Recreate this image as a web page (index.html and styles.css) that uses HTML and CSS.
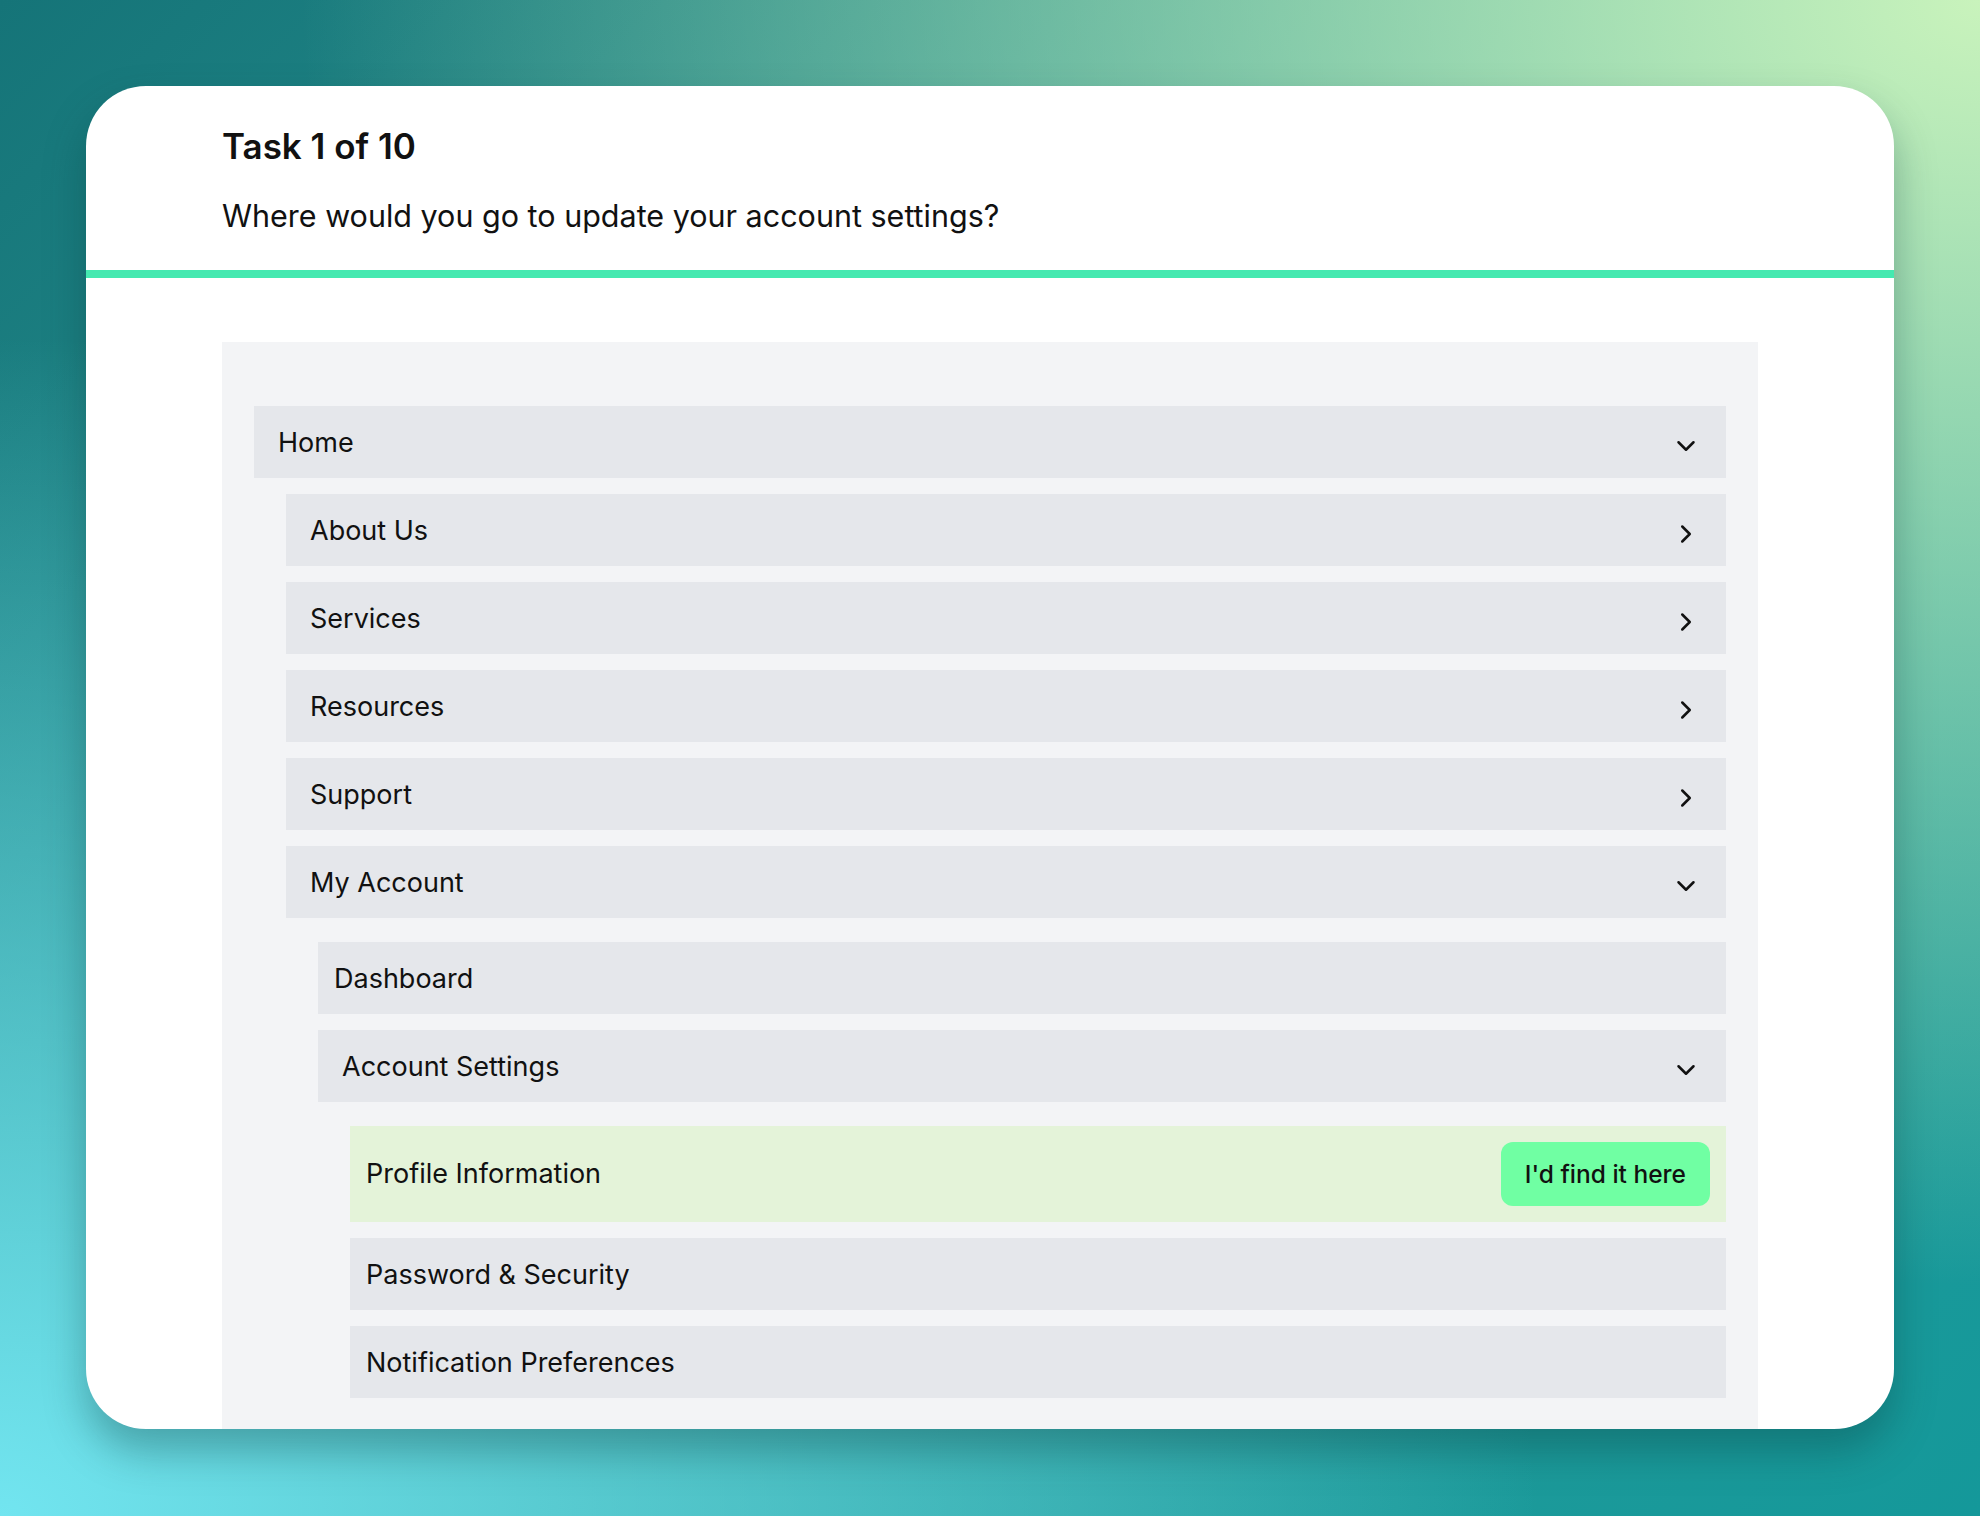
FILE: index.html
```html
<!DOCTYPE html>
<html lang="en">
<head>
    <meta charset="UTF-8">
    <meta name="viewport" content="width=device-width, initial-scale=1.0">
    <title>Tree Test - Task 1 of 10</title>
    <link rel="stylesheet" href="styles.css">
</head>
<body>
    <div class="page">
        <div class="card">
            <div class="task-header">
                <h1>Task 1 of 10</h1>
                <p class="question">Where would you go to update your account settings?</p>
            </div>

            <div class="task-body">
                <div class="tree">
                    <ul class="tree-list">
                        <li>
                            <div class="row branch">
                                <span>Home</span>
                                <svg class="chev" viewBox="0 0 24 24"><path d="M19.5 8.25l-7.5 7.5-7.5-7.5"/></svg>
                            </div>
                            <ul class="tree-list nested first">
                                <li>
                                    <div class="row branch">
                                        <span>About Us</span>
                                        <svg class="chev" viewBox="0 0 24 24"><path d="M8.25 4.5l7.5 7.5-7.5 7.5"/></svg>
                                    </div>
                                </li>
                                <li>
                                    <div class="row branch">
                                        <span>Services</span>
                                        <svg class="chev" viewBox="0 0 24 24"><path d="M8.25 4.5l7.5 7.5-7.5 7.5"/></svg>
                                    </div>
                                </li>
                                <li>
                                    <div class="row branch">
                                        <span>Resources</span>
                                        <svg class="chev" viewBox="0 0 24 24"><path d="M8.25 4.5l7.5 7.5-7.5 7.5"/></svg>
                                    </div>
                                </li>
                                <li>
                                    <div class="row branch">
                                        <span>Support</span>
                                        <svg class="chev" viewBox="0 0 24 24"><path d="M8.25 4.5l7.5 7.5-7.5 7.5"/></svg>
                                    </div>
                                </li>
                                <li>
                                    <div class="row branch">
                                        <span>My Account</span>
                                        <svg class="chev" viewBox="0 0 24 24"><path d="M19.5 8.25l-7.5 7.5-7.5-7.5"/></svg>
                                    </div>
                                    <ul class="tree-list nested">
                                        <li>
                                            <div class="row leaf"><span>Dashboard</span></div>
                                        </li>
                                        <li>
                                            <div class="row branch">
                                                <span>Account Settings</span>
                                                <svg class="chev" viewBox="0 0 24 24"><path d="M19.5 8.25l-7.5 7.5-7.5-7.5"/></svg>
                                            </div>
                                            <ul class="tree-list nested">
                                                <li>
                                                    <div class="row leaf selected">
                                                        <span>Profile Information</span>
                                                        <button type="button" class="pick-btn">I'd find it here</button>
                                                    </div>
                                                </li>
                                                <li>
                                                    <div class="row leaf"><span>Password &amp; Security</span></div>
                                                </li>
                                                <li>
                                                    <div class="row leaf"><span>Notification Preferences</span></div>
                                                </li>
                                            </ul>
                                        </li>
                                    </ul>
                                </li>
                            </ul>
                        </li>
                    </ul>
                </div>
            </div>
        </div>
    </div>
</body>
</html>
```

FILE: styles.css
```css
html, body {
    margin: 0;
    height: 100%;
}
body {
    font-family: Inter, "Noto Sans", sans-serif;
    color: #111;
    background:
        radial-gradient(ellipse at 100% 0%, rgba(201, 243, 188, 1) 0%, rgba(201, 243, 188, 0) 60%),
        radial-gradient(ellipse at 0% 100%, rgba(114, 229, 240, 1) 0%, rgba(114, 229, 240, 0) 55%),
        linear-gradient(135deg, #157478 0%, #2f9e9a 50%, #14989a 100%);
    overflow: hidden;
}
.page {
    height: 100%;
    box-sizing: border-box;
    padding: 86px 86px 87px;
    display: flex;
}
.card {
    flex: 1;
    background: #fff;
    border-radius: 60px;
    overflow: hidden;
    box-shadow: 0 22px 40px rgba(10, 60, 60, 0.35);
}
.task-header {
    padding: 40px 136px 36px;
    border-bottom: 8px solid #45e9b0;
}
.task-header h1 {
    margin: 0;
    font-size: 35px;
    line-height: 40px;
    font-weight: 600;
}
.question {
    margin: 32px 0 0;
    font-size: 30.5px;
    line-height: 36px;
}
.task-body {
    padding: 64px 136px 0;
}
.tree {
    background: #f3f4f6;
    padding: 64px 32px 32px;
}
.tree-list {
    list-style: none;
    margin: 0;
    padding: 0;
    display: flex;
    flex-direction: column;
    gap: 16px;
}
.nested {
    padding-left: 32px;
    margin-top: 24px;
}
.nested.first {
    margin-top: 16px;
}
.row {
    display: flex;
    align-items: center;
    justify-content: space-between;
    height: 72px;
    box-sizing: border-box;
    background: #e5e7eb;
    font-size: 27px;
    line-height: 40px;
    padding-top: 2px;
}
.row.branch {
    padding-left: 24px;
    padding-right: 28px;
}
.row.leaf {
    padding-left: 16px;
    padding-right: 16px;
}
.row.selected {
    height: 96px;
    padding-top: 0;
    background: #e4f3d9;
}
.chev {
    width: 24px;
    height: 24px;
    margin-top: 6px;
    fill: none;
    stroke: #111;
    stroke-width: 2.5;
    stroke-linecap: round;
    stroke-linejoin: round;
}
.pick-btn {
    height: 64px;
    padding: 0 24px;
    border: none;
    border-radius: 12px;
    background: #70ffa3;
    color: #111;
    font-family: Inter, "Noto Sans", sans-serif;
    font-size: 24.5px;
    font-weight: 500;
    cursor: pointer;
}
```
